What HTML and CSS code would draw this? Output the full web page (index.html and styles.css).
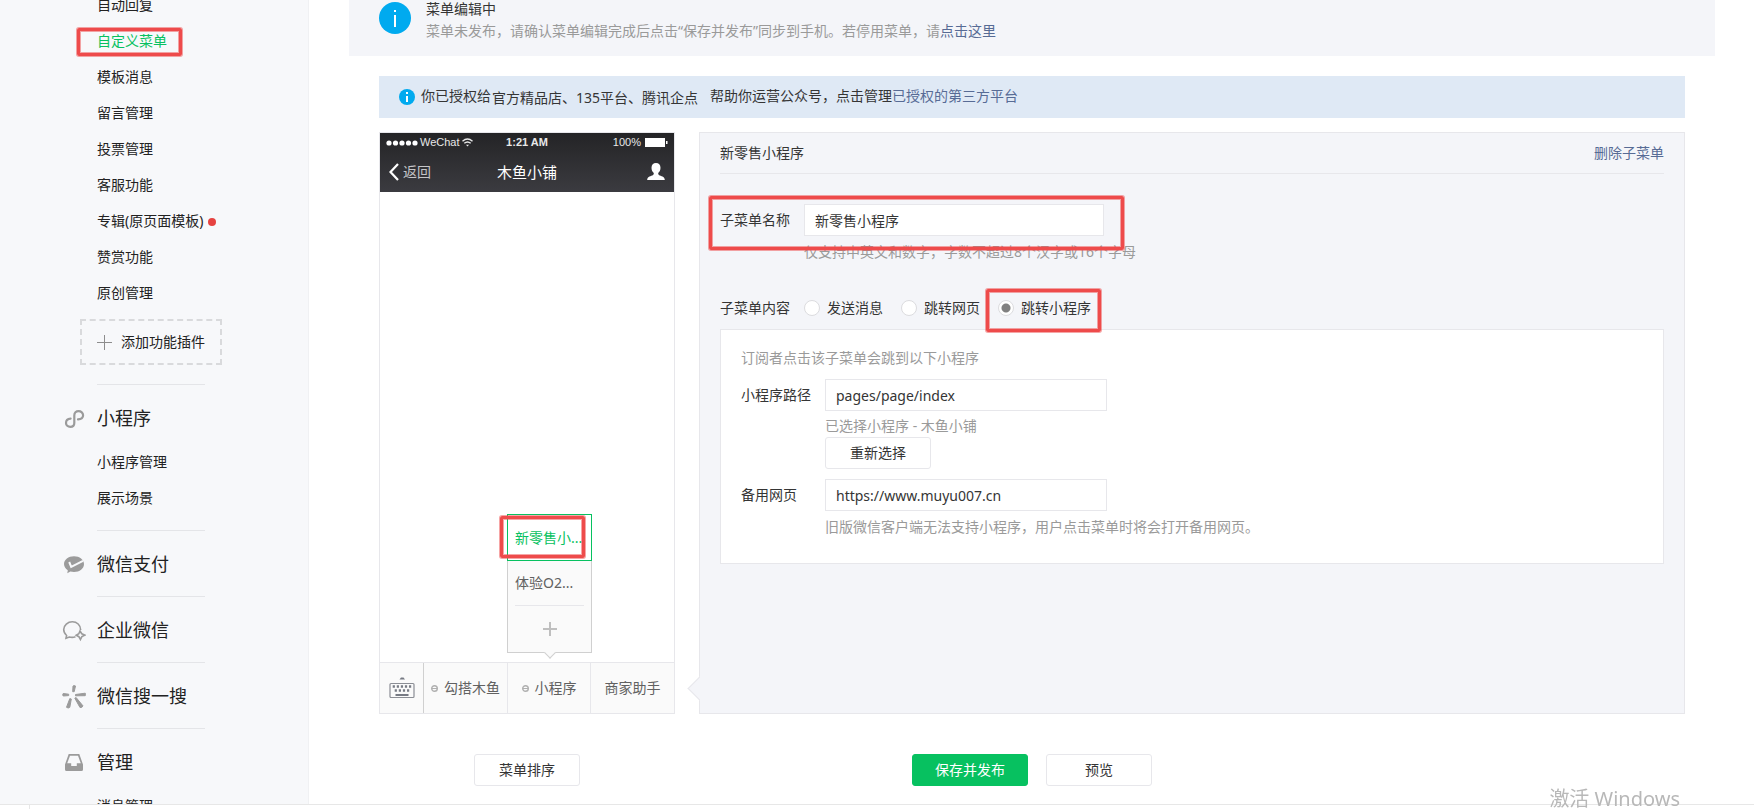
FILE: index.html
```html
<!DOCTYPE html>
<html lang="zh-CN">
<head>
<meta charset="utf-8">
<meta name="viewport" content="width=device-width, initial-scale=1">
<title>自定义菜单</title>
<link rel="stylesheet" href="styles.css">
</head>
<body>
<div class="shell">
  <aside class="sidebar">
    <nav class="nav">
      <section class="nav-section">
        <ul class="nav-list">
          <li><a href="#">自动回复</a></li>
          <li class="marked"><a href="#" class="active">自定义菜单</a><span class="mark mark-nav"></span></li>
          <li><a href="#">模板消息</a></li>
          <li><a href="#">留言管理</a></li>
          <li><a href="#">投票管理</a></li>
          <li><a href="#">客服功能</a></li>
          <li><a href="#" class="has-dot">专辑(原页面模板)</a></li>
          <li><a href="#">赞赏功能</a></li>
          <li><a href="#">原创管理</a></li>
        </ul>
        <button type="button" class="add-plugin">
          <svg width="15" height="15" viewBox="0 0 15 15"><path d="M7.5 0v15M0 7.5h15" stroke="#8d8d8d" fill="none"/></svg>
          添加功能插件
        </button>
      </section>
      <section class="nav-section has-list">
        <h2 class="nav-title">
          <svg width="24" height="24" viewBox="0 0 24 24"><path d="M16 12.400c3-.2 5.100-1.600 5.100-4.200 0-2.400-2-4-4.500-4-2.700 0-4.300 1.600-4.300 4.200v7.600c0 2.300-1.600 3.900-4 3.900s-4.300-1.600-4.300-4c0-2.600 2.100-4 4.600-4.200" stroke="#9b9b9b" stroke-width="2.200" stroke-linecap="round" fill="none"/></svg>
          小程序
        </h2>
        <ul class="nav-list">
          <li><a href="#">小程序管理</a></li>
          <li><a href="#">展示场景</a></li>
        </ul>
      </section>
      <section class="nav-section">
        <h2 class="nav-title">
          <svg width="24" height="24" viewBox="0 0 24 24"><path d="M12 3.200c5.600 0 10 3.400 10 7.900s-4.400 8-10 8c-1.300 0-2.500-.2-3.600-.5L5.300 20.300l.5-3C3.500 15.900 2 13.700 2 11.100c0-4.500 4.400-7.900 10-7.900z" fill="#9b9b9b"/><path d="M7.200 9l2 4.800L21 7.800" stroke="#f7f8fa" stroke-width="2" fill="none"/></svg>
          微信支付
        </h2>
      </section>
      <section class="nav-section">
        <h2 class="nav-title">
          <svg width="24" height="24" viewBox="0 0 24 24" fill="none" stroke="#9b9b9b" stroke-width="1.600"><path d="M18.700 11C18.700 6 14.800 2.800 10.300 2.800S1.700 6.300 1.700 10.600c0 2.400 1.100 4.400 2.900 5.900L4 19.300l3.300-1.300c2 .6 4.300.5 6.200-.2"/><path d="M18 12l1.800 2.800 3 1.300-2.900 1.500-1.500 2.900-1.500-2.800-2.700-1.500 2.600-1.500z"/></svg>
          企业微信
        </h2>
      </section>
      <section class="nav-section">
        <h2 class="nav-title">
          <svg width="24" height="24" viewBox="0 0 24 24" fill="#9b9b9b" stroke="#9b9b9b" stroke-linejoin="round"><path d="M11 1q1.500-1 2.500 0l-1.300 5.700h-1.500zM1.200 8.500l5.500.7v1.400l-5.500.4q-1-1.200 0-2.500zM13.500 9.500l9.700-1.300q1 1.300 0 2.500l-9.700.1zM7.800 13.600l1.500.4-1.500 8.300q-1.500 1.400-3.300 0zM12.800 13.200l1.300-.7 6.800 8.300q-.6 2.200-2.900 1.700z"/></svg>
          微信搜一搜
        </h2>
      </section>
      <section class="nav-section">
        <h2 class="nav-title">
          <svg width="24" height="24" viewBox="0 0 24 24"><path fill-rule="evenodd" d="M6.700 3h10.600L21 13.500V18.500a1.500 1.500 0 0 1-1.500 1.500h-15A1.500 1.500 0 0 1 3 18.500V13.500zM8 4.700L5.200 12.200h4v2.700h5.600v-2.700h4L16 4.700z" fill="#9b9b9b"/></svg>
          管理
        </h2>
        <ul class="nav-list">
          <li><a href="#">消息管理</a></li>
        </ul>
      </section>
    </nav>
  </aside>

  <main class="main">
    <section class="status-tip">
      <svg width="32" height="32" viewBox="0 0 32 32"><circle cx="16" cy="16" r="16" fill="#00aaef"/><path d="M16 13v12M16 8v2" stroke="#fff" stroke-width="2"/></svg>
      <div>
        <h1 class="tip-title">菜单编辑中</h1>
        <p class="muted">菜单未发布，请确认菜单编辑完成后点击“保存并发布”同步到手机。若停用菜单，请<a href="#" class="link">点击这里</a></p>
      </div>
    </section>

    <div class="workspace">
      <div class="auth-tip">
        <svg width="16" height="16" viewBox="0 0 16 16"><circle cx="8" cy="8" r="8" fill="#00aaef"/><path d="M8 7v6M8 3v2" stroke="#fff" stroke-width="2"/></svg>
        <p>你已授权给<span class="grantees">官方精品店、135平台、腾讯企点</span>帮助你运营公众号，点击管理<a href="#" class="link">已授权的第三方平台</a></p>
      </div>

      <div class="editor">
        <section class="phone">
          <header class="phone-head">
            <div class="phone-status">
              <span class="carrier">
                <svg width="32" height="6" viewBox="0 0 32 6" fill="#fff"><circle cx="3" cy="3" r="2.600"/><circle cx="9.500" cy="3" r="2.600"/><circle cx="16" cy="3" r="2.600"/><circle cx="22.500" cy="3" r="2.600"/><circle cx="29" cy="3" r="2.600"/></svg>
                WeChat
                <svg width="11" height="9" viewBox="0 0 11 9" fill="none" stroke="#e8e8e8" stroke-width="1.400"><path d="M.5 3.200q5-4.500 10 0M2.300 5.300q3.200-2.800 6.400 0"/><path d="M4 6.700h3L5.500 8.500z" fill="#e8e8e8" stroke="none"/></svg>
              </span>
              <span class="clock">1:21 AM</span>
              <span class="battery">100%
                <svg width="23" height="9" viewBox="0 0 23 9" fill="#fff"><path d="M0 0h20v9H0zM21 3h1.500v3H21z"/></svg>
              </span>
            </div>
            <div class="phone-bar">
              <span class="back"><svg width="10" height="18" viewBox="0 0 10 18"><path d="M9 1L1.500 9 9 17" stroke="#fff" stroke-width="2.200" fill="none"/></svg>返回</span>
              <span class="phone-title">木鱼小铺</span>
              <svg class="person" width="18" height="18" viewBox="0 0 18 18"><path d="M9 0c2.800 0 4.500 2 4.500 4.800 0 2.300-1 4.300-2.300 5.300 0 1.500.3 1.900 1.500 2.300 2.700.9 5.100 1.500 5.100 4.600H.2c0-3.100 2.400-3.700 5.100-4.600 1.200-.4 1.500-.8 1.500-2.300-1.300-1-2.300-3-2.300-5.300C4.500 2 6.200 0 9 0z" fill="#fff"/></svg>
            </div>
          </header>
          <div class="phone-body"></div>
          <footer class="phone-menu">
            <button type="button" class="key" aria-label="键盘">
              <svg width="26" height="22" viewBox="0 0 26 22"><path d="M10.500 2.500l1.500-2h2.500l1.500 2z" fill="#777b84"/><rect x="1" y="6.500" width="24" height="14" rx="1" fill="none" stroke="#8b8e95" stroke-width="1.200"/><path d="M3.700 9.500h18.500" stroke="#777b84" stroke-width="2.500" stroke-dasharray="2.200 1.870"/><path d="M5.700 13.500h15" stroke="#777b84" stroke-width="2.500" stroke-dasharray="2.200 1.900"/><path d="M6.500 18h13" stroke="#777b84" stroke-width="2"/></svg>
            </button>
            <button type="button" class="tab"><svg class="ring" width="7" height="7" viewBox="0 0 7 7"><circle cx="3.500" cy="3.500" r="2.800" stroke="#b0b0b0" stroke-width="1.400" fill="none"/><path d="M1 3.500h5" stroke="#b0b0b0"/></svg>勾搭木鱼</button>
            <div class="tab-wrap">
              <button type="button" class="tab"><svg class="ring" width="7" height="7" viewBox="0 0 7 7"><circle cx="3.500" cy="3.500" r="2.800" stroke="#b0b0b0" stroke-width="1.400" fill="none"/><path d="M1 3.500h5" stroke="#b0b0b0"/></svg>小程序</button>
              <div class="submenu">
                <button type="button" class="sub current"><span>新零售小...</span></button>
                <button type="button" class="sub"><span>体验O2...</span></button>
                <button type="button" class="sub" aria-label="添加"><svg width="14" height="14" viewBox="0 0 14 14"><path d="M7 0v14M0 7h14" stroke="#bfbfbf" stroke-width="2"/></svg></button>
                <span class="submenu-arrow"></span>
                <span class="mark mark-sub"></span>
              </div>
            </div>
            <button type="button" class="tab">商家助手</button>
          </footer>
        </section>

        <form class="panel">
          <span class="panel-arrow"></span>
          <header class="panel-head">
            <h2 class="panel-title">新零售小程序</h2>
            <a href="#" class="link">删除子菜单</a>
          </header>
          <div class="row row-name">
            <label class="label" for="sub-name">子菜单名称</label>
            <div>
              <input class="field" id="sub-name" type="text" value="新零售小程序">
              <p class="muted hint">仅支持中英文和数字，字数不超过8个汉字或16个字母</p>
            </div>
            <span class="mark mark-name"></span>
          </div>
          <div class="row row-kind" role="radiogroup" aria-labelledby="kind">
            <span class="label" id="kind">子菜单内容</span>
            <label class="choice"><input type="radio" name="kind">发送消息</label>
            <label class="choice"><input type="radio" name="kind">跳转网页</label>
            <label class="choice"><input type="radio" name="kind" checked>跳转小程序<span class="mark mark-kind"></span></label>
          </div>
          <div class="card">
            <p class="muted">订阅者点击该子菜单会跳到以下小程序</p>
            <div class="row">
              <label class="label" for="path">小程序路径</label>
              <div>
                <input class="field" id="path" type="text" value="pages/page/index">
                <p class="muted picked">已选择小程序 - 木鱼小铺</p>
                <button type="button" class="btn">重新选择</button>
              </div>
            </div>
            <div class="row">
              <label class="label" for="fallback">备用网页</label>
              <div>
                <input class="field" id="fallback" type="text" value="https://www.muyu007.cn">
                <p class="muted hint">旧版微信客户端无法支持小程序，用户点击菜单时将会打开备用网页。</p>
              </div>
            </div>
          </div>
        </form>
      </div>

      <div class="actions">
        <div class="actions-left"><button type="button" class="btn">菜单排序</button></div>
        <div class="actions-main">
          <button type="button" class="btn primary">保存并发布</button>
          <button type="button" class="btn">预览</button>
        </div>
      </div>
    </div>
  </main>
</div>
<div class="bottom-strip"><span class="strip-cell"></span></div>
<div class="watermark">激活 Windows</div>
</body>
</html>
```

FILE: styles.css
```css
* { box-sizing: border-box; }

body {
  margin: 0;
  height: 100vh;
  display: flex;
  flex-direction: column;
  overflow: hidden;
  background: #fff;
  color: #353535;
  font-family: "Noto Sans", "Noto Sans CJK SC", sans-serif;
  font-size: 14px;
  line-height: 22px;
}

h1, h2, p, ul { margin: 0; padding: 0; font-size: inherit; font-weight: 400; }
ul { list-style: none; }
a { color: inherit; text-decoration: none; }
svg { display: block; flex: none; }
button, input { font: inherit; color: inherit; }
button { padding: 0; border: 0; background: none; cursor: pointer; }

.link { color: #576b95; }
.muted { color: #9a9a9a; }

.mark {
  position: absolute;
  border: 3px solid #ee4b4b;
  border-radius: 2px;
  box-shadow: 0 0 0 1px rgba(238, 75, 75, .5), inset 0 0 0 1px rgba(238, 75, 75, .5);
  pointer-events: none;
  z-index: 3;
}

.shell { flex: 1; min-height: 0; display: flex; overflow: hidden; }

/* sidebar */
.sidebar {
  flex: none;
  width: 309px;
  background: #f7f8fa;
  border-right: 1px solid #f0f1f3;
  color: #222;
}
.nav { margin-top: -13px; }
.nav-section { padding: 0 0 18px 97px; }
.nav-section.has-list { padding-bottom: 14px; }
.nav-section + .nav-section::before {
  content: "";
  display: block;
  width: 108px;
  height: 1px;
  background: #e4e5e8;
}
.nav-list li { line-height: 36px; }
.nav-list a.active { color: #07c160; }
.marked { position: relative; }
.mark-nav { left: -20px; top: 5px; width: 105px; height: 28px; }
.has-dot::after {
  content: "";
  display: inline-block;
  width: 8px;
  height: 8px;
  margin-left: 5px;
  border-radius: 50%;
  background: #e64340;
}
.add-plugin {
  display: flex;
  align-items: center;
  gap: 9px;
  height: 46px;
  margin: 8px 0 19px -17px;
  padding: 0 15px;
  border: 2px dashed #d9dadc;
}
.nav-section:first-child { padding-bottom: 0; }
.nav-title {
  display: flex;
  align-items: center;
  gap: 11px;
  margin: 20px 0 0 -35px;
  font-size: 18px;
  line-height: 27px;
}
.nav-title + .nav-list { margin-top: 12px; }

/* main */
.main { flex: 1; min-width: 0; padding: 0 39px 0 40px; }
.status-tip {
  display: flex;
  gap: 15px;
  margin-top: -20px;
  padding: 18px 30px 14px;
  background: #f4f5f9;
}
.status-tip svg { margin-top: 4px; }
.workspace { padding: 20px 30px 0; }
.auth-tip {
  display: flex;
  align-items: center;
  gap: 6px;
  min-height: 42px;
  padding: 0 20px;
  background: #dfe9f5;
}
.grantees {
  display: inline-block;
  vertical-align: middle;
  margin: 0 12px 0 1px;
}

.editor { display: flex; gap: 24px; margin-top: 14px; }

/* phone preview */
.phone {
  flex: none;
  width: 296px;
  display: flex;
  flex-direction: column;
  border: 1px solid #e7e7eb;
}
.phone-head {
  height: 59px;
  padding: 0 6px;
  background: linear-gradient(#242426, #3b3b40);
  color: #fff;
}
.phone-status, .phone-bar {
  display: grid;
  grid-template-columns: 1fr auto 1fr;
  align-items: center;
}
.phone-status {
  height: 19px;
  font-family: "Liberation Sans", sans-serif;
  font-size: 11px;
  line-height: 19px;
  color: #e8e8e8;
}
.carrier, .battery { display: flex; align-items: center; gap: 2px; }
.battery { justify-self: end; gap: 4px; }
.clock { font-weight: 700; }
.phone-bar { height: 40px; padding: 0 3px; }
.back { display: flex; align-items: center; gap: 4px; color: #c5c5c8; }
.phone-title { font-size: 15px; }
.person { justify-self: end; }
.phone-body { flex: 1; }
.phone-menu {
  display: flex;
  height: 51px;
  border-top: 1px solid #e7e7eb;
  background: #fafafa;
  color: #616161;
}
.key {
  width: 43px;
  display: flex;
  align-items: center;
  justify-content: center;
}
.tab {
  flex: 1;
  display: flex;
  align-items: center;
  justify-content: center;
  gap: 6px;
  border-left: 1px solid #e7e7eb;
}
.key + .tab { border-left-color: #d0d0d0; }
.tab-wrap { flex: 1; display: flex; position: relative; }
.submenu {
  position: absolute;
  left: 0;
  right: -2px;
  bottom: 60px;
  border: 1px solid #d0d0d0;
  background: #fafafa;
}
.sub {
  display: flex;
  align-items: center;
  width: 100%;
  height: 46px;
  padding: 0 7px;
  white-space: nowrap;
}
.sub span { flex: 1; text-align: left; line-height: 44px; }
.sub:nth-child(2) span { border-bottom: 1px solid #e7e7eb; }
.sub svg { margin: 0 auto; }
.sub.current {
  width: auto;
  height: 47px;
  margin: -1px;
  border: 1px solid #07c160;
  background: #fff;
  color: #07c160;
}
.submenu .current { min-width: calc(100% + 2px); }
.submenu-arrow {
  position: absolute;
  left: 50%;
  bottom: -5px;
  width: 8px;
  height: 8px;
  margin-left: -4px;
  transform: rotate(45deg);
  border: solid #d0d0d0;
  border-width: 0 1px 1px 0;
  background: #fafafa;
}
.mark-sub { left: -8px; top: 1px; width: 85px; height: 42px; }

/* edit panel */
.panel {
  position: relative;
  flex: 1;
  min-width: 0;
  min-height: 582px;
  padding: 0 20px 20px;
  border: 1px solid #e7e7eb;
  background: #f4f5f9;
}
.panel-arrow {
  position: absolute;
  left: -9px;
  bottom: 16px;
  width: 17px;
  height: 17px;
  transform: rotate(45deg);
  border: solid #e7e7eb;
  border-width: 0 0 1px 1px;
  background: #f4f5f9;
}
.panel-head {
  display: flex;
  justify-content: space-between;
  line-height: 40px;
  border-bottom: 1px solid #e7e7eb;
}
.row { display: flex; position: relative; }
.label { flex: none; width: 84px; line-height: 32px; }
.field {
  display: block;
  width: 282px;
  height: 32px;
  padding: 0 10px;
  border: 1px solid #e7e7eb;
  border-radius: 0;
  background: #fff;
  outline: 0;
}
.row-name { margin-top: 30px; }
.row-name .field { width: 300px; }
.hint { margin-top: 5px; }
.mark-name { left: -11px; top: -8px; width: 415px; height: 54px; }
.row-kind { margin-top: 29px; align-items: center; }
.choice {
  position: relative;
  display: flex;
  align-items: center;
  gap: 7px;
  margin-right: 18px;
}
.choice input {
  appearance: none;
  width: 16px;
  height: 16px;
  margin: 0;
  border: 1px solid #dcdcdf;
  border-radius: 50%;
  background: #fff;
}
.choice input:checked { background: radial-gradient(circle, #808080 4px, #fff 5px); }
.mark-kind { left: -12px; right: -10px; top: -8px; height: 43px; }
.card {
  margin-top: 5px;
  min-height: 235px;
  padding: 17px 20px 20px;
  border: 1px solid #e7e7eb;
  background: #fff;
}
.card .row { margin-top: 10px; }
.picked { margin-top: 4px; }

/* buttons */
.btn {
  display: block;
  min-width: 106px;
  height: 32px;
  padding: 0 20px;
  border: 1px solid #e7e7eb;
  border-radius: 3px;
  background: #fff;
}
.btn.primary { min-width: 116px; border-color: #07c160; background: #07c160; color: #fff; }
.actions {
  display: grid;
  grid-template-columns: 1fr auto 1fr;
  margin-top: 40px;
}
.actions-left { width: 296px; display: flex; justify-content: center; }
.actions-main { display: flex; gap: 18px; }

.bottom-strip {
  flex: none;
  display: flex;
  height: 5px;
  border-top: 1px solid #e7e7e7;
  background: #fff;
}
.strip-cell { width: 30px; border-right: 1px solid #e7e7e7; }
.watermark {
  position: fixed;
  right: 74px;
  bottom: -4px;
  font-size: 20px;
  line-height: 28px;
  color: #b8b8b8;
  pointer-events: none;
}
```
